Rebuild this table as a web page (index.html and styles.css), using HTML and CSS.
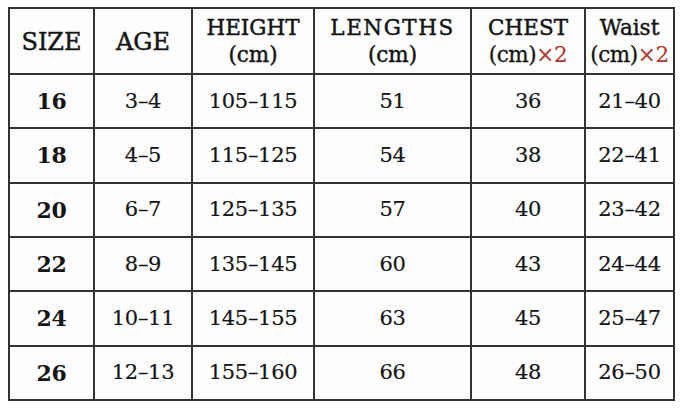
FILE: index.html
```html
<!DOCTYPE html>
<html>
<head>
<meta charset="utf-8">
<link rel="stylesheet" href="styles.css">
</head>
<body>
<div class="page">
  <div class="chart">
    <div class="cell head big">SIZE</div>
    <div class="cell head big">AGE</div>
    <div class="cell head"><span>HEIGHT</span><span>(cm)</span></div>
    <div class="cell head"><span class="wide">LENGTHS</span><span>(cm)</span></div>
    <div class="cell head"><span>CHEST</span><span class="unit">(cm)<em class="red">×2</em></span></div>
    <div class="cell head"><span>Waist</span><span class="unit">(cm)<em class="red">×2</em></span></div>

    <div class="cell size">16</div><div class="cell">3–4</div><div class="cell">105–115</div><div class="cell">51</div><div class="cell">36</div><div class="cell">21–40</div>
    <div class="cell size">18</div><div class="cell">4–5</div><div class="cell">115–125</div><div class="cell">54</div><div class="cell">38</div><div class="cell">22–41</div>
    <div class="cell size">20</div><div class="cell">6–7</div><div class="cell">125–135</div><div class="cell">57</div><div class="cell">40</div><div class="cell">23–42</div>
    <div class="cell size">22</div><div class="cell">8–9</div><div class="cell">135–145</div><div class="cell">60</div><div class="cell">43</div><div class="cell">24–44</div>
    <div class="cell size">24</div><div class="cell">10–11</div><div class="cell">145–155</div><div class="cell">63</div><div class="cell">45</div><div class="cell">25–47</div>
    <div class="cell size">26</div><div class="cell">12–13</div><div class="cell">155–160</div><div class="cell">66</div><div class="cell">48</div><div class="cell">26–50</div>
  </div>
</div>
</body>
</html>
```

FILE: styles.css
```css
html, body {
  margin: 0;
  padding: 0;
  background: #ffffff;
}
.page {
  padding: 7px 0 0 8px;
}
.chart {
  display: grid;
  grid-template-columns: 83px 96px 120px 155px 112px 87px;
  grid-template-rows: 64px repeat(6, 1fr);
  gap: 2px;
  padding: 2px;
  width: 663px;
  height: 390px;
  background: #333333;
  font-family: "DejaVu Serif", "Liberation Serif", serif;
  color: #151515;
}
.cell {
  background: #fdfdfd;
  display: flex;
  flex-direction: column;
  align-items: center;
  justify-content: center;
  font-size: 21px;
  line-height: 1;
  letter-spacing: -0.3px;
  -webkit-text-stroke: 0.2px currentColor;
}
.head {
  font-size: 21.5px;
  line-height: 27px;
  letter-spacing: 0;
  -webkit-text-stroke: 0.45px currentColor;
}
.head .wide {
  letter-spacing: 1.5px;
}
.head .unit {
  letter-spacing: -0.4px;
  -webkit-text-stroke: 0.3px currentColor;
}
.head.big {
  font-size: 24px;
  padding-top: 2px;
}
.size {
  font-weight: bold;
  font-size: 22px;
  -webkit-text-stroke: 0;
}
.red {
  font-style: normal;
  color: #b5362b;
  -webkit-text-stroke: 0.15px currentColor;
}
```
